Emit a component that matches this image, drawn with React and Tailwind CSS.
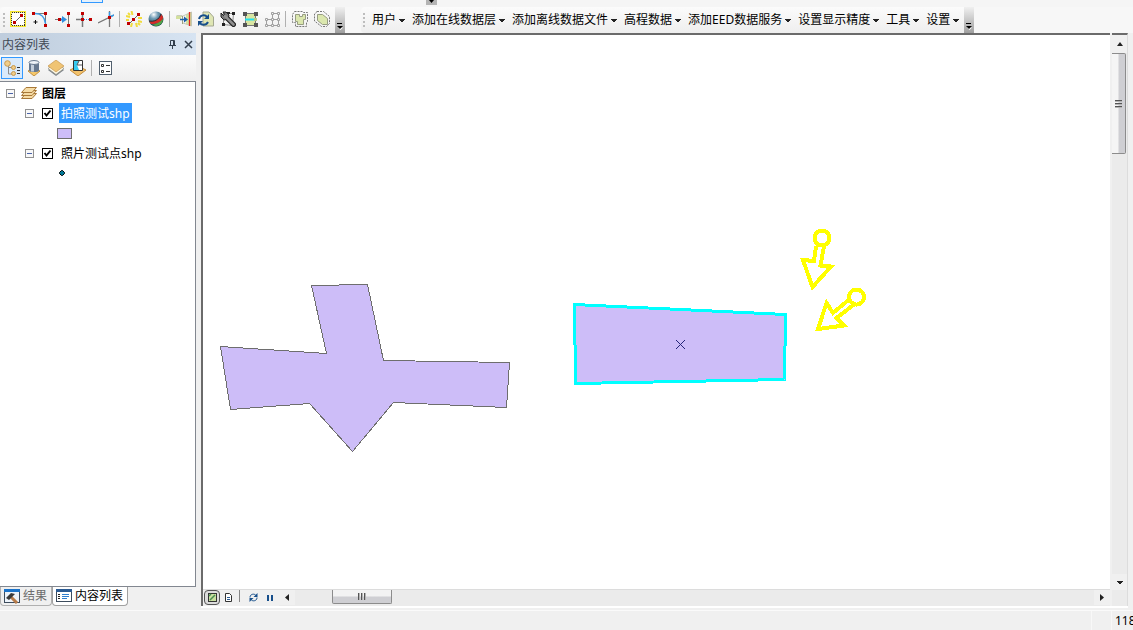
import { useState } from "react";

const dot = "#c00000";

function Icon({ children, size = 16, className = "" }) {
  return (
    <svg width={size} height={size} viewBox={`0 0 ${size} ${size}`} className={`shrink-0 ${className}`} aria-hidden="true">
      {children}
    </svg>
  );
}

const EndPointIcon = () => (
  <Icon>
    <rect x="0.5" y="0.5" width="15" height="15" fill="#fff" stroke="#f7e72e" />
    <rect x="1" y="1" width="14" height="14" fill="none" stroke="#f7e72e" />
    <rect x="1.5" y="1.5" width="13" height="13" fill="none" stroke="#333" strokeDasharray="1 1" shapeRendering="crispEdges" />
    <path d="M4.5 11.5 11.5 4.5" stroke="#666" />
    <path d="M3 10h3v3H3zM10 3h3v3h-3z" fill={dot} />
  </Icon>
);

const ArcIcon = () => (
  <Icon>
    <path d="M2 2.5h11.5V14" fill="none" stroke="#777" />
    <path d="M3 2.5c6 0 10 4 10.500 10" fill="none" stroke="#3a9be8" strokeWidth="1.600" />
    <path d="M0 1h3v3H0zM12 1h3v3h-3zM12 13h3v3h-3z" fill={dot} />
    <path d="M3.500 9v4M1.500 11h4" stroke="#111" />
  </Icon>
);

const SnapLineIcon = () => (
  <Icon>
    <path d="M14.500 2v12M1 8.500h4" stroke="#777" fill="none" />
    <path d="M5 8.500h4" stroke="#2f8fe0" strokeWidth="2" />
    <path d="M8 5v7l5-3.500z" fill="#2f8fe0" />
    <path d="M4 7h3v3H4zM13 1h3v3h-3zM13 13h3v3h-3z" fill={dot} />
  </Icon>
);

const MidpointIcon = () => (
  <Icon>
    <path d="M6.500 1v15M0 8.500h6" stroke="#777" strokeWidth="1.500" />
    <path d="M8 8.500h5" stroke="#2f8fe0" strokeDasharray="1 1" />
    <path d="M5 1h3v3H5zM5 7h3v3H5zM13 7h3v3h-3z" fill={dot} />
  </Icon>
);

const IntersectIcon = () => (
  <Icon>
    <path d="M0 12 16 4M11.500 0v16" stroke="#777" strokeWidth="1.300" />
    <path d="M12 6 16 4M11.500 1v5" stroke="#3a9be8" strokeWidth="1.500" />
    <path d="M10 5h3v3h-3z" fill={dot} />
  </Icon>
);

const SparkIcon = () => (
  <Icon>
    <path d="M5.500 0l1 4M10 12l1 4M0 5l4 1M12 10l4 1M2 2l2 2M12 12l2 2M12 7h4M0 9h3M6 12l-1 4" stroke="#f0dc3c" strokeWidth="2" />
    <path d="M3 13 13 3" stroke="#666" />
    <path d="M1 11h3v3H1zM6 7h3v3H6zM11 2h3v3h-3z" fill={dot} />
  </Icon>
);

const GlobeIcon = () => (
  <Icon>
    <defs>
      <radialGradient id="globe" cx="0.35" cy="0.2" r="0.8">
        <stop offset="0" stopColor="#fff" />
        <stop offset="0.35" stopColor="#719cb5" />
        <stop offset="1" stopColor="#123f4b" />
      </radialGradient>
    </defs>
    <circle cx="8" cy="8" r="7.500" fill="url(#globe)" />
    <path d="M1 10c4 1 10-1 12-7l2 3c0 5-5 7-12 7z" fill="#d42c27" />
    <path d="M4 14c5-1 8-3 11-6 0 4-3 7-7 7z" fill="#52a447" />
    <path d="M1 10c5 1 10-1 12-7" fill="none" stroke="#20303a" />
  </Icon>
);

const SplitIcon = () => (
  <Icon>
    <path d="M0.500 5h6v8M0.500 5v3" fill="none" stroke="#9aa181" />
    <path d="M0 5h5v3H0zM10 4l5-3v14l-5-2z" fill="#d3e09e" />
    <path d="M7 5 15.500 1v14L7 12" fill="none" stroke="#c3c7b3" />
    <path d="M13.500 1v14" stroke="#e02020" strokeWidth="1.300" />
    <path d="M4 8.500h5" stroke="#1d5fa8" strokeWidth="1.500" />
    <path d="M8 5.500v6l4-3z" fill="#1d5fa8" />
  </Icon>
);

const ReshapeIcon = () => (
  <Icon>
    <path d="M5 1h6l4.500 5v9H5z" fill="#dfe6b4" stroke="#a4a891" />
    <path d="M1 8c1-4 6-5 8-2M10 11c-2 4-7 3-8 1" fill="none" stroke="#174f8b" strokeWidth="2" />
    <path d="M6 8h5V3zM5 10H0v5z" fill="#174f8b" />
  </Icon>
);

const ModifyIcon = () => (
  <Icon>
    <path d="M3.500 13.500v-11h10l-1 12z" fill="none" stroke="#222" strokeDasharray="1 1" />
    <path d="M12 1h3v3h-3zM2 12h3v3H2zM7 1h3v2H7z" fill="#222" />
    <path d="m5.500 5.500 8 8" stroke="#222" strokeWidth="5" strokeLinecap="round" />
    <path d="M1 2v4l3 3 4-1 1-4-3-3H3l2 3-1 1z" fill="#777" stroke="#222" />
    <path d="m5 5 8.500 8.500" stroke="#8e8e8e" strokeWidth="2.600" strokeLinecap="round" />
  </Icon>
);

const GridEditIcon = () => (
  <Icon>
    <path d="M3.500 2.500h10v12h-10z" fill="#d9e6a2" stroke="#777" />
    <path d="M3 8.500h11" stroke="#22e0ee" strokeWidth="2" />
    <path d="M1 1h4v4H1zM12 1h4v4h-4zM1 12h4v4H1zM12 12h4v4h-4z" fill="#555" />
    <path d="M12 7h3v3h-3z" fill="#b7c986" />
  </Icon>
);

const TopologyIcon = () => (
  <Icon>
    <path d="M8.500 2v12.500M2.500 8.500h12v6h-12zM8.500 2.500h6v6" fill="none" stroke="#a0a0a0" />
    <g fill="#f5f5f5" stroke="#a0a0a0">
      <path d="M7.500 1.500h2v2h-2zM13.500 1.500h2v2h-2zM1.500 7.500h2v2h-2zM7.500 7.500h2v2h-2zM13.500 7.500h2v2h-2zM1.500 13.500h2v2h-2zM7.500 13.500h2v2h-2zM13.500 13.500h2v2h-2z" />
    </g>
  </Icon>
);

const BufferIcon = () => (
  <Icon>
    <path d="M3.500 3.500h4v2h3v-2h3v5h-2v5h-6v-3h-2z" fill="#dbe7ae" stroke="#979d82" />
    <path d="M2.500.5h8l1 1h4v9l-1 1v4h-11v-4h-3v-8z" fill="none" stroke="#777" strokeDasharray="2 1" />
  </Icon>
);

const BufferRoundIcon = () => (
  <Icon>
    <path d="M3.500 3.500h5l5 4v6h-5l-5-4z" fill="#dbe7ae" stroke="#979d82" />
    <path d="M3 .5h6.500l6 5v7l-3 3h-5l-7-5.500V3z" fill="none" stroke="#777" strokeDasharray="2 1" />
  </Icon>
);

const DrawOrderIcon = () => (
  <Icon>
    <path d="M4.500 6v8H8M4.500 7.500H8" fill="none" stroke="#8c8c8c" />
    <g fill="#f0cd8a" stroke="#c99a4c">
      <circle cx="3.500" cy="3.500" r="2.800" />
      <circle cx="9.500" cy="7.500" r="2" />
      <circle cx="9.500" cy="13.500" r="2" />
    </g>
    <path d="M13 7.500h3M13 10.500h3M13 13.500h3" stroke="#333" />
  </Icon>
);

const SourceIcon = () => (
  <Icon>
    <path d="m2 11 6-3 6 3-6 5z" fill="#f5c76a" stroke="#c4913f" />
    <path d="M3 2.500v8c0 2 10 2 10 0v-8z" fill="#66788f" />
    <path d="M5 3v8.500h3V3z" fill="#c3cedb" />
    <ellipse cx="8" cy="2.500" rx="5" ry="2" fill="#eef3f8" stroke="#66788f" />
  </Icon>
);

const LayerIcon = () => (
  <Icon>
    <path d="m0 10 8-5 8 5-8 6z" fill="#7d848b" />
    <path d="m0 8.500 8-5 8 5-8 6z" fill="#fffbe7" stroke="#8b8b83" strokeWidth="0.700" />
    <path d="m0 6 8-6 8 6-8 6z" fill="#f0c474" stroke="#c69650" strokeWidth="0.700" />
  </Icon>
);

const SelectionIcon = () => (
  <Icon>
    <path d="m0 10 8-4 8 4-8 6z" fill="#f3c26b" stroke="#c18d3f" />
    <path d="M3.500.5h9v10h-9z" fill="#fff" stroke="#333" />
    <path d="M4 1h5l-2 4 2 5H4z" fill="#36c9ee" />
    <path d="m9 1-2 4h5" fill="none" stroke="#555" />
  </Icon>
);

const OptionsIcon = () => (
  <Icon>
    <rect x="1.500" y="1.500" width="12" height="13" fill="#fff" stroke="#52606e" />
    <path d="M3.500 4.500h2v2h-2zM3.500 10.500h2v2h-2z" fill="#fff" stroke="#333" />
    <path d="M8 5.500h4M8 11.500h4" stroke="#333" />
  </Icon>
);

const StackIcon = () => (
  <Icon>
    {[8, 5, 2].map((y) => (
      <path key={y} transform={`translate(0 ${y})`} d="M0.500 5.500 5 .5h10.500l-4.500 5z" fill="#f6dca6" stroke="#a87838" />
    ))}
  </Icon>
);

const ResultsIcon = () => (
  <Icon>
    <rect x="0.500" y="1.500" width="15" height="13" fill="#edf3fa" stroke="#3d4c5d" />
    <path d="M0 1h16v3H0z" fill="#1b73c9" />
    <path d="m7 9 6 6" stroke="#b67a48" strokeWidth="3" />
    <path d="m2 10 5-5 4 1-6 6z" fill="#3a3a3a" />
  </Icon>
);

const ContentsIcon = () => (
  <Icon>
    <rect x="0.500" y="1.500" width="15" height="12" fill="#fff" stroke="#3d4c5d" />
    <path d="M0 1h16v3H0z" fill="#2b5b93" />
    <path d="M2 6.500h2M2 8.500h2M2 10.500h2" stroke="#222" />
    <path d="M6 6.500h7M6 8.500h7M6 10.500h5" stroke="#2f7fd0" />
  </Icon>
);

function Grip() {
  return (
    <svg width="3" height="15" className="shrink-0" aria-hidden="true">
      {[0, 4, 8, 12].map((y) => (
        <rect key={y} x="0" y={y} width="2" height="2" fill="#bdbdbd" />
      ))}
    </svg>
  );
}

function Caret({ dir = "down" }) {
  const shapes = {
    down: "M1 3h6v1H6v1H5v1H3V5H2V4H1z",
    up: "M1 6h6L4 2z",
    left: "M6 1v7L2 4.500z",
    right: "M2 1v7l4-3.500z",
  };
  return (
    <svg width="8" height="9" className="shrink-0" aria-hidden="true">
      <path d={shapes[dir]} fill="#222" />
    </svg>
  );
}

function Overflow() {
  return (
    <button type="button" aria-label="More" className="flex h-[26px] w-[10px] shrink-0 items-end justify-center bg-linear-to-b from-[#f0f0f0] to-[#a0a0a0] pb-[3px]">
      <svg width="8" height="8" aria-hidden="true">
        <path d="M1 1.500h5" stroke="#000" />
        <path d="M2 5.500h5L4.500 8z" fill="#fff" />
        <path d="M1 4h6L4 7z" fill="#000" />
      </svg>
    </button>
  );
}

const toolGroups = [
  [
    ["End point", EndPointIcon],
    ["Arc", ArcIcon],
    ["Trace", SnapLineIcon],
    ["Midpoint", MidpointIcon],
    ["Intersection", IntersectIcon],
  ],
  [
    ["Explode", SparkIcon],
    ["Globe", GlobeIcon],
  ],
  [
    ["Split", SplitIcon],
    ["Reshape", ReshapeIcon],
    ["Modify", ModifyIcon],
    ["Edit grid", GridEditIcon],
    ["Topology", TopologyIcon],
  ],
  [
    ["Buffer", BufferIcon],
    ["Round buffer", BufferRoundIcon],
  ],
];

const menus = ["用户", "添加在线数据层", "添加离线数据文件", "高程数据", "添加EED数据服务", "设置显示精度", "工具", "设置"];

function Toolbar() {
  return (
    <header className="shrink-0 overflow-hidden bg-[#f7f7f7]">
      <div className="flex h-[7px] items-start bg-[#f5f5f5]">
        <div className="ml-[81px] h-[3px] w-[22px] border border-t-0 border-[#3399ff] bg-[#e5f1fc]" />
        <div className="ml-[323px] flex h-[5px] w-[11px] justify-center bg-[#b4b4b4]">
          <svg width="7" height="4" aria-hidden="true"><path d="M1 0h5L3.500 3z" /></svg>
        </div>
      </div>
      <div className="flex h-[26px]">
        <div className="flex shrink-0 items-center rounded-l bg-linear-to-b from-[#fbfbfb] to-[#eeeeee] pl-[3px]">
          <Grip />
          <div className="flex items-center pr-0.5 pb-0.5 pl-px">
            {toolGroups.map((group, i) => (
              <div key={i} className="flex items-center">
                {i > 0 && <span className="mr-[3px] ml-0.5 h-4 w-px bg-[#b0b0b0]" />}
                {group.map(([name, Glyph]) => (
                  <button key={name} type="button" aria-label={name} className="flex h-[22px] w-[22px] items-center justify-center">
                    <Glyph />
                  </button>
                ))}
              </div>
            ))}
          </div>
          <Overflow />
        </div>
        <nav className="ml-4 flex shrink-0 items-center rounded-l bg-linear-to-b from-[#fbfbfb] to-[#eeeeee] pl-0.5">
          <Grip />
          <div className="flex items-center pl-1.5">
            {menus.map((name) => (
              <button key={name} type="button" className="flex h-[22px] items-center gap-0.5 pr-1.5 leading-4 whitespace-nowrap last:pr-1">
                {name}
                <Caret />
              </button>
            ))}
          </div>
          <Overflow />
        </nav>
      </div>
    </header>
  );
}

function Expander({ open, onToggle }) {
  return (
    <button type="button" aria-label="Toggle" aria-expanded={open} onClick={onToggle} className="flex h-[9px] w-[9px] shrink-0 items-center justify-center border border-[#919191] bg-[#f8f8f8]">
      <svg width="7" height="7" aria-hidden="true">
        <path d={open ? "M1 3.500h5" : "M1 3.500h5M3.500 1v5"} stroke="#4b63a7" />
      </svg>
    </button>
  );
}

function LayerItem({ id, name, selected, onSelect, children }) {
  const [open, setOpen] = useState(true);
  return (
    <li>
      <div className="flex h-5 items-center pl-[25px]">
        <Expander open={open} onToggle={() => setOpen(!open)} />
        <span className="relative ml-2 h-[11px] w-[11px] shrink-0">
          <input id={id} type="checkbox" defaultChecked className="peer block h-[11px] w-[11px] appearance-none border border-black bg-white" />
          <svg width="11" height="11" className="pointer-events-none absolute inset-0 hidden peer-checked:block" aria-hidden="true">
            <path d="m2.500 5 2 2.500 4-5" fill="none" stroke="#000" strokeWidth="2" />
          </svg>
        </span>
        <label
          htmlFor={id}
          onClick={onSelect}
          className={`ml-1.5 h-5 px-0.5 leading-[22px] whitespace-nowrap ${selected ? "bg-[#3399ff] text-white" : ""}`}
        >
          {name}
        </label>
      </div>
      {open && <div className="flex h-5 items-center pl-[57px]">{children}</div>}
    </li>
  );
}

const listModes = [
  ["Drawing order", DrawOrderIcon],
  ["Source", SourceIcon],
  ["Visibility", LayerIcon],
  ["Selection", SelectionIcon],
];

function ContentsPanel() {
  const [mode, setMode] = useState("Drawing order");
  const [selected, setSelected] = useState("polygon");
  const [open, setOpen] = useState(true);
  return (
    <aside className="flex w-[196px] shrink-0 flex-col">
      <div className="flex h-[22px] shrink-0 items-center bg-linear-to-r from-[#bfcddd] to-[#d7e4f2] pl-0.5 text-[#3f4854]">
        <h2 className="h-5 flex-1 leading-[22px]">内容列表</h2>
        <button type="button" aria-label="Pin" className="flex w-4 justify-center">
          <Icon size={9}>
            <path d="M2.500 5V.5h4V5M1 5.500h7M4.500 6v3M5.500 1v4" fill="none" stroke="#333f4d" />
          </Icon>
        </button>
        <button type="button" aria-label="Close" className="flex w-4 justify-center">
          <Icon size={9}>
            <path d="m1 1 7 7M8 1 1 8" stroke="#333f4d" strokeWidth="1.500" />
          </Icon>
        </button>
      </div>
      <div className="flex h-[26px] shrink-0 items-center bg-linear-to-b from-[#fbfbfb] to-[#eeeeee] pl-px">
        {listModes.map(([name, Glyph]) => (
          <button
            key={name}
            type="button"
            aria-label={name}
            onClick={() => setMode(name)}
            className={`flex h-[22px] w-[22px] items-center justify-center ${mode === name ? "border border-[#3399ff] bg-[#d9eafb]" : ""}`}
          >
            <Glyph />
          </button>
        ))}
        <span className="mr-[3px] ml-0.5 h-4 w-px bg-[#b0b0b0]" />
        <button type="button" aria-label="Options" className="flex h-[22px] w-[22px] items-center justify-center">
          <OptionsIcon />
        </button>
      </div>
      <div className="min-h-0 flex-1 overflow-hidden border border-l-0 border-[#828790] bg-white pt-px">
        <div className="flex h-5 items-center pl-1.5 font-bold">
          <Expander open={open} onToggle={() => setOpen(!open)} />
          <span className="ml-1.5 flex items-center gap-[5px]">
            <StackIcon />
            <span className="h-5 leading-[22px]">图层</span>
          </span>
        </div>
        {open && (
          <ul>
            <LayerItem id="polygon" name="拍照测试shp" selected={selected === "polygon"} onSelect={() => setSelected("polygon")}>
              <span className="h-[11px] w-[15px] border border-[#6e6e6e] bg-[#cdbdf8]" />
            </LayerItem>
            <LayerItem id="point" name="照片测试点shp" selected={selected === "point"} onSelect={() => setSelected("point")}>
              <svg width="9" height="9" aria-hidden="true">
                <path d="M4.500 1.500h1l2 2v1l-2 2h-1l-2-2v-1z" fill="#007896" stroke="#000" />
              </svg>
            </LayerItem>
          </ul>
        )}
      </div>
      <div className="flex h-[21px] shrink-0 items-start">
        <button type="button" className="flex h-[19px] items-center gap-[3px] rounded-b border border-t-0 border-[#b0b0b0] pr-1 pl-[3px] text-[#6d6d6d]">
          <ResultsIcon />
          结果
        </button>
        <button type="button" className="flex h-[19px] items-center gap-[3px] rounded-b border border-t-0 border-[#a0a0a0] bg-white pr-1 pl-[3px]">
          <ContentsIcon />
          内容列表
        </button>
      </div>
    </aside>
  );
}

function MapCanvas() {
  return (
    <svg className="block h-full w-full" role="img" aria-label="Map">
      <g shapeRendering="crispEdges">
        <path
          d="M108.500 250.500 164.500 249.500 180.500 325.500 306.500 327.500 303.500 372.500 190.500 367.500 149.500 416.500 106.500 368.500 27.500 374.500 17.500 311.500 123.500 318.500Z"
          fill="#cdbdf8"
          stroke="#6e6e6e"
        />
        <path d="M371.500 269.500 582.500 279.500 581.500 344.500 372.500 348.500Z" fill="#cdbdf8" stroke="#00ffff" strokeWidth="3" />
        <path d="m473 305 9 9m0-9-9 9" stroke="#26267a" />
      </g>
      <g fill="none" stroke="#ffff00" strokeWidth="4" shapeRendering="crispEdges">
        <circle cx="619" cy="203" r="7.500" />
        <path d="M613 211 611 226 600 225 609.500 252 628 231.500 617.500 230.500 621 211" />
        <circle cx="653.500" cy="262" r="7.500" />
        <path d="M646 264.500 630 278 623.500 268 615 294 641 290.500 633.500 283 651 269.500" />
      </g>
    </svg>
  );
}

function MapFooter() {
  return (
    <div className="flex h-4 shrink-0 items-start">
      <button type="button" aria-label="Data view" className="ml-px flex h-[15px] w-4 items-center justify-center rounded-sm border border-[#555] bg-[#dcdcdc]">
        <Icon size={9}>
          <rect x="0.500" y="0.500" width="8" height="8" fill="#c9dfa0" stroke="#333" />
          <path d="m2 7 5-5M1 3l2-2" stroke="#4b8f52" strokeWidth="1.500" />
        </Icon>
      </button>
      <button type="button" aria-label="Layout view" className="flex h-[15px] w-4 items-center justify-center">
        <Icon size={9}>
          <path d="M1.500.5h4l2 2v6h-6z" fill="#fff" stroke="#333" />
          <path d="M3 4.500h3M3 6.500h3" stroke="#2b5b93" />
        </Icon>
      </button>
      <span className="mr-0.5 ml-[3px] h-3 w-px bg-[#888]" />
      <button type="button" aria-label="Refresh" className="flex h-[15px] w-[22px] items-center justify-center">
        <Icon size={9}>
          <path d="M1 4.500c0-4 5-4 6-2M8 4.500c0 4-5 4-6 2" fill="none" stroke="#174f8b" />
          <path d="M8.500 0v4h-4zM.5 9V5h4z" fill="#174f8b" />
        </Icon>
      </button>
      <button type="button" aria-label="Pause" className="flex h-[15px] w-3 items-center justify-center">
        <Icon size={8}>
          <path d="M1 1h2v6H1zM5 1h2v6H5z" fill="#174f8b" />
        </Icon>
      </button>
      <div className="ml-[3px] flex h-4 flex-1 items-start bg-[#ebebeb]">
        <button type="button" aria-label="Scroll left" className="flex h-[15px] w-4 items-center justify-center bg-[#f0f0f0]">
          <Caret dir="left" />
        </button>
        <div className="ml-[37px] flex h-[14px] w-[60px] items-center justify-center gap-px rounded-b-xs border border-t-0 border-[#8c8c8c] bg-linear-to-b from-[#f3f3f3] from-45% to-[#cfcfd3] to-55%">
          {[0, 1, 2].map((i) => (
            <span key={i} className="h-[7px] w-0.5 border-l border-[#555] bg-[#b5b5b5]" />
          ))}
        </div>
        <button type="button" aria-label="Scroll right" className="ml-auto flex h-[15px] w-4 items-center justify-center bg-[#f0f0f0]">
          <Caret dir="right" />
        </button>
      </div>
    </div>
  );
}

function MapView() {
  return (
    <main className="mr-[5px] ml-[5px] flex min-w-0 flex-1 border-b-2 border-b-white">
      <div className="flex min-w-0 flex-1 flex-col border-t-2 border-l-2 border-[#6b6b6b]">
        <div className="min-h-0 flex-1 overflow-hidden border-b border-[#dcdcdc] bg-white">
          <MapCanvas />
        </div>
        <MapFooter />
      </div>
      <div className="ml-0.5 flex w-4 shrink-0 flex-col border-t-2 border-r border-t-[#6b6b6b] border-r-[#dcdcdc] bg-[#ebebeb]">
        <button type="button" aria-label="Scroll up" className="flex h-[18px] items-center justify-center bg-[#f0f0f0]">
          <Caret dir="up" />
        </button>
        <div className="mr-px flex h-[101px] flex-col items-center justify-center gap-px rounded-r-xs border border-l-0 border-[#8c8c8c] bg-linear-to-r from-[#f5f5f5] from-45% to-[#cfcfd3] to-55%">
          {[0, 1, 2].map((i) => (
            <span key={i} className="h-0.5 w-[7px] border-t border-[#555] bg-[#b5b5b5]" />
          ))}
        </div>
        <button type="button" aria-label="Scroll down" className="mt-auto mb-4 flex h-4 items-center justify-center bg-[#f0f0f0]">
          <Caret />
        </button>
      </div>
    </main>
  );
}

export default function App() {
  return (
    <div className="flex h-screen flex-col overflow-hidden bg-[#f0f0f0] font-['Noto_Sans','Noto_Sans_CJK_SC',sans-serif] text-[12px] leading-4 text-black">
      <Toolbar />
      <div className="flex min-h-0 flex-1">
        <ContentsPanel />
        <MapView />
      </div>
      <footer className="mt-0.5 flex h-5 shrink-0 items-center justify-end overflow-hidden border-t border-[#fafafa]">
        <span className="h-full w-5 border-l border-[#f8f8f8]" />
        <span className="h-full w-[22px] border-l border-[#f8f8f8] pl-[3px] leading-5">118</span>
      </footer>
    </div>
  );
}
